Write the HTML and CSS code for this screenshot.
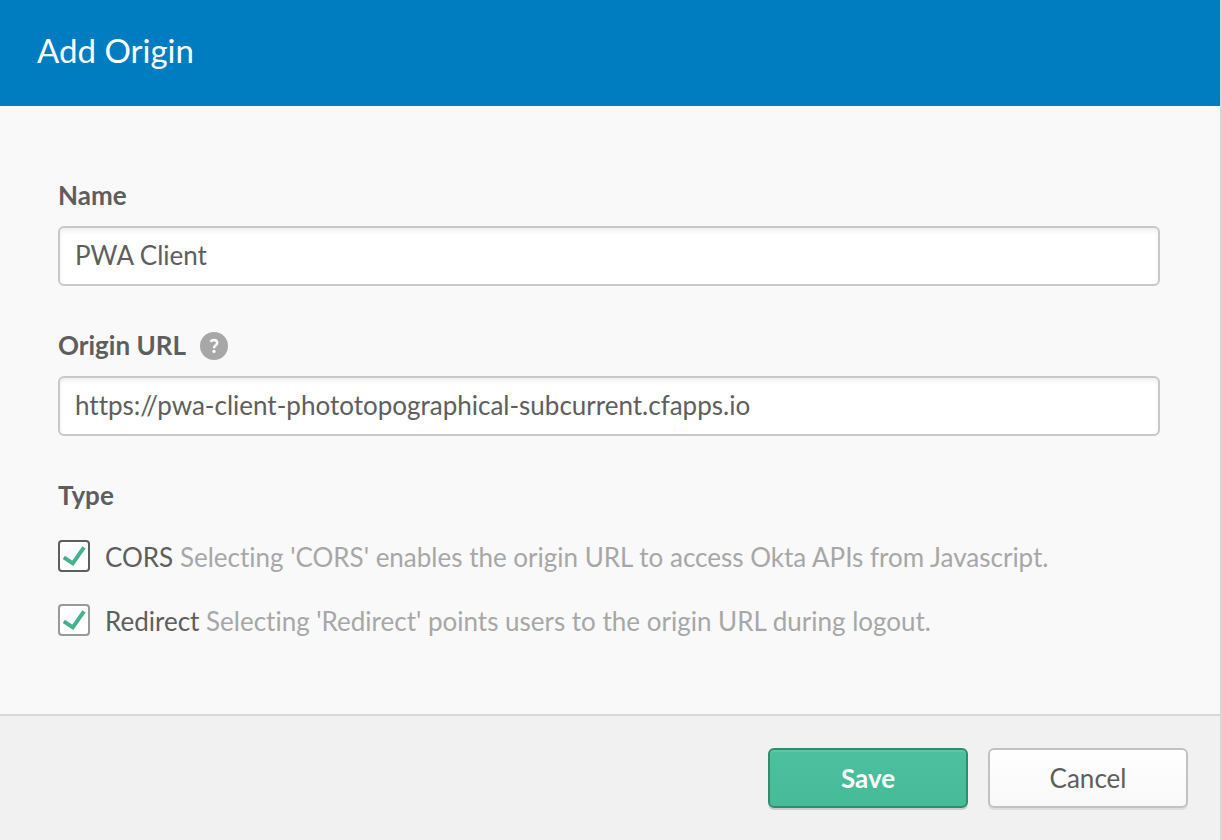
FILE: index.html
```html
<!DOCTYPE html>
<html lang="en">
<head>
<meta charset="utf-8">
<title>Add Origin</title>
<link rel="stylesheet" href="styles.css">
</head>
<body>
<form class="dialog">
  <header class="dialog-header"><h1 class="dialog-title">Add Origin</h1></header>
  <main class="dialog-body">
    <div class="field">
      <div class="field-head"><label class="field-label" for="name">Name</label></div>
      <input class="text-input" id="name" type="text" value="PWA Client">
    </div>
    <div class="field">
      <div class="field-head">
        <label class="field-label" for="origin">Origin URL</label>
        <button class="help" type="button" aria-label="Help">
          <svg class="help-icon" viewBox="0 0 28 28" aria-hidden="true">
            <circle cx="14" cy="14" r="14" fill="#a7a7a7"/>
            <path d="M10.4 9.8Q11.8 8 14.2 8Q17.2 8.2 17.2 10.8Q17.2 12.4 15.5 13.4Q14 14.3 14 16.3" fill="none" stroke="#f9f9f9" stroke-width="2.6"/>
            <circle cx="14" cy="19.4" r="1.7" fill="#f9f9f9"/>
          </svg>
        </button>
      </div>
      <input class="text-input" id="origin" type="text" value="https://pwa-client-phototopographical-subcurrent.cfapps.io">
    </div>
    <fieldset class="types">
      <legend class="field-label">Type</legend>
      <label class="option">
        <span class="check">
          <input class="check-input check-input-focus" type="checkbox" checked>
          <svg class="check-mark" viewBox="0 0 32 32" aria-hidden="true"><path d="M5.8 17.3L14.8 23.3L26 7.3"/></svg>
        </span>
        <span class="option-text">CORS <span class="hint">Selecting 'CORS' enables the origin URL to access Okta APIs from Javascript.</span></span>
      </label>
      <label class="option">
        <span class="check">
          <input class="check-input" type="checkbox" checked>
          <svg class="check-mark" viewBox="0 0 32 32" aria-hidden="true"><path d="M5.8 17.3L14.8 23.3L26 7.3"/></svg>
        </span>
        <span class="option-text">Redirect <span class="hint">Selecting 'Redirect' points users to the origin URL during logout.</span></span>
      </label>
    </fieldset>
  </main>
  <footer class="dialog-footer">
    <button class="button button-primary" type="button">Save</button>
    <button class="button" type="button">Cancel</button>
  </footer>
</form>
</body>
</html>
```

FILE: styles.css
```css
* {
  box-sizing: border-box;
}

body {
  margin: 0;
  background: #d6d6d6;
  color: #5e5e5e;
  font-family: Lato, "Open Sans", sans-serif;
  font-size: 26px;
  font-variant-ligatures: none;
  line-height: 32px;
}

.dialog {
  display: flex;
  flex-direction: column;
  min-height: 100vh;
  margin-right: 2px;
  background: #f9f9f9;
}

.dialog-header {
  padding: 30px 37px 36px;
  background: #007dc1;
}

.dialog-title {
  margin: 0;
  color: #fff;
  font-size: 33px;
  font-weight: 400;
  line-height: 40px;
}

.dialog-body {
  display: flex;
  flex: 1;
  flex-direction: column;
  gap: 42px;
  padding: 72px 60px 76px 58px;
}

.field {
  display: flex;
  flex-direction: column;
  gap: 12px;
}

.field-head {
  display: flex;
  align-items: center;
  gap: 14px;
  height: 36px;
}

.field-label {
  padding: 0 0 2px;
  font-weight: 700;
}

.help {
  width: 28px;
  height: 28px;
  padding: 0;
  border: 0;
  background: none;
}

.help-icon,
.check-mark {
  display: block;
}

.text-input {
  width: 100%;
  height: 60px;
  padding: 0 15px 2px;
  border: 2px solid #c8c8c8;
  border-radius: 6px;
  background: #fff;
  box-shadow: inset 0 3px 4px #f0f0f0;
  color: inherit;
  font: inherit;
  font-variant-ligatures: none;
}

.types {
  display: flex;
  flex-direction: column;
  gap: 32px;
  margin: 0;
  padding: 28px 0 0;
  border: 0;
}

.types .field-label {
  padding: 1px 0;
}

.option {
  display: flex;
  align-items: center;
  gap: 15px;
}

.option-text {
  padding-top: 2px;
}

.option {
  height: 32px;
}

.check {
  display: grid;
  width: 32px;
  height: 32px;
}

.check-input,
.check-mark {
  grid-area: 1 / 1;
}

.check-input {
  width: 32px;
  height: 32px;
  margin: 0;
  border: 2px solid #999;
  border-radius: 4px;
  background: #fff;
  appearance: none;
}

.check-input-focus {
  border-color: #5e5e5e;
}

.check-mark {
  visibility: hidden;
  fill: none;
  stroke: #46b18f;
  stroke-width: 4;
  pointer-events: none;
}

.check-input:checked + .check-mark {
  visibility: visible;
}

.hint {
  color: #a7a7a7;
}

.dialog-footer {
  display: flex;
  justify-content: flex-end;
  gap: 20px;
  padding: 32px;
  border-top: 2px solid #d8d8d8;
  background: #f1f1f1;
}

.button {
  width: 200px;
  height: 60px;
  border: 2px solid #c1c1c1;
  border-radius: 6px;
  background: linear-gradient(#fff, #f8f8f8);
  box-shadow: 0 2px 0 #dedede;
  color: #5e5e5e;
  font: inherit;
}

.button-primary {
  border-color: #2f8d6e;
  background: linear-gradient(#4dc09e, #46bb98);
  box-shadow: 0 2px 0 #ccc, inset 0 2px 0 #5dc8a8;
  color: #fff;
  font-weight: 700;
}
```
